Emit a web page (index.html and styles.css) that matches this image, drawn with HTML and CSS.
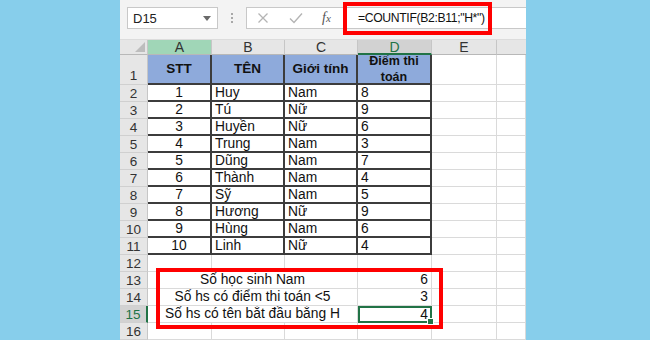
FILE: index.html
```html
<!DOCTYPE html>
<html>
<head>
<meta charset="utf-8">
<link rel="stylesheet" href="styles.css">
</head>
<body>
<div class="page">
  <div class="excel">
    <div class="toolbar">
      <div class="namebox">
        <span class="nb-text">D15</span>
        <svg class="caret" width="8" height="5" viewBox="0 0 8 5"><path d="M0 0 L8 0 L4 5 Z" fill="#6a6a6a"/></svg>
      </div>
      <div class="dots"><i></i><i></i><i></i></div>
      <div class="fbar">
        <svg class="ico" width="12" height="12" viewBox="0 0 12 12"><path d="M1.5 1.5 L10.5 10.5 M10.5 1.5 L1.5 10.5" stroke="#b4b4b4" stroke-width="1.3" fill="none"/></svg>
        <svg class="ico chk" width="14" height="12" viewBox="0 0 14 12"><path d="M1 6.5 L5 10.5 L13 1.5" stroke="#b4b4b4" stroke-width="1.4" fill="none"/></svg>
        <span class="fx"><i>f</i><span class="fxx">x</span></span>
        <span class="formula">=COUNTIF(B2:B11;"H*")</span>
      </div>
    </div>
    <div class="sheet">
      <div class="corner"><svg width="10" height="10" viewBox="0 0 10 10"><path d="M10 0 L10 10 L0 10 Z" fill="#bdbdbd"/></svg></div>
      <div class="ch ch-a">A</div>
      <div class="ch">B</div>
      <div class="ch">C</div>
      <div class="ch ch-sel">D</div>
      <div class="ch">E</div>
      <div class="ch ch-f"></div>

      <div class="rh rh1">1</div>
      <div class="c t hd">STT</div>
      <div class="c t hd">TÊN</div>
      <div class="c t hd">Giới tính</div>
      <div class="c t hd hd2">Điểm thi<br>toán</div>
      <div class="c"></div><div class="c"></div>

      <div class="rh">2</div><div class="c t ctr">1</div><div class="c t">Huy</div><div class="c t">Nam</div><div class="c t">8</div><div class="c"></div><div class="c"></div>
      <div class="rh">3</div><div class="c t ctr">2</div><div class="c t">Tú</div><div class="c t">Nữ</div><div class="c t">9</div><div class="c"></div><div class="c"></div>
      <div class="rh">4</div><div class="c t ctr">3</div><div class="c t">Huyền</div><div class="c t">Nữ</div><div class="c t">6</div><div class="c"></div><div class="c"></div>
      <div class="rh">5</div><div class="c t ctr">4</div><div class="c t">Trung</div><div class="c t">Nam</div><div class="c t">3</div><div class="c"></div><div class="c"></div>
      <div class="rh">6</div><div class="c t ctr">5</div><div class="c t">Dũng</div><div class="c t">Nam</div><div class="c t">7</div><div class="c"></div><div class="c"></div>
      <div class="rh">7</div><div class="c t ctr">6</div><div class="c t">Thành</div><div class="c t">Nam</div><div class="c t">4</div><div class="c"></div><div class="c"></div>
      <div class="rh">8</div><div class="c t ctr">7</div><div class="c t">Sỹ</div><div class="c t">Nam</div><div class="c t">5</div><div class="c"></div><div class="c"></div>
      <div class="rh">9</div><div class="c t ctr">8</div><div class="c t">Hương</div><div class="c t">Nữ</div><div class="c t">9</div><div class="c"></div><div class="c"></div>
      <div class="rh">10</div><div class="c t ctr">9</div><div class="c t">Hùng</div><div class="c t">Nam</div><div class="c t">6</div><div class="c"></div><div class="c"></div>
      <div class="rh">11</div><div class="c t ctr">10</div><div class="c t">Linh</div><div class="c t">Nữ</div><div class="c t">4</div><div class="c"></div><div class="c"></div>

      <div class="rh">12</div><div class="c"></div><div class="c"></div><div class="c"></div><div class="c"></div><div class="c"></div><div class="c"></div>
      <div class="rh">13</div><div class="c m3 ctr">Số học sinh Nam</div><div class="c rt">6</div><div class="c"></div><div class="c"></div>
      <div class="rh">14</div><div class="c m3 ctr">Số hs có điểm thi toán &lt;5</div><div class="c rt">3</div><div class="c"></div><div class="c"></div>
      <div class="rh rh-sel">15</div><div class="c m3 ctr">Số hs có tên bắt đầu bằng H</div><div class="c rt sel">4<span class="handle"></span></div><div class="c"></div><div class="c"></div>
      <div class="rh">16</div><div class="c"></div><div class="c"></div><div class="c"></div><div class="c"></div><div class="c"></div><div class="c"></div>
    </div>
    <div class="callout callout-formula"></div>
    <div class="callout callout-result"></div>
  </div>
</div>
</body>
</html>
```

FILE: styles.css
```css
html, body {
  margin: 0;
  padding: 0;
}
body {
  width: 650px;
  height: 340px;
  overflow: hidden;
  background: #87ceeb;
  font-family: "Liberation Sans", Arial, sans-serif;
}
.page {
  display: flex;
  justify-content: flex-start;
  padding-left: 120px;
}
.excel {
  position: relative;
  width: 406px;
  height: 340px;
  background: #ffffff;
  overflow: hidden;
}
.toolbar {
  height: 40px;
  box-sizing: border-box;
  background: #f3f3f3;
  display: flex;
  align-items: flex-start;
  padding-top: 7px;
  padding-left: 7px;
  border-bottom: 1px solid #dcdcdc;
}
.namebox {
  width: 91px;
  height: 22px;
  box-sizing: border-box;
  background: #fff;
  border: 1px solid #c8c8c8;
  display: flex;
  align-items: center;
  justify-content: space-between;
  padding: 0 6px 0 5px;
}
.nb-text {
  font-size: 13px;
  color: #222;
}
.caret {
  display: block;
}
.dots {
  width: 28px;
  height: 22px;
  display: flex;
  flex-direction: column;
  align-items: center;
  justify-content: center;
  gap: 2px;
}
.dots i {
  display: block;
  width: 2px;
  height: 2px;
  background: #a8a8a8;
}
.fbar {
  flex: 1;
  height: 22px;
  box-sizing: border-box;
  background: #fff;
  border: 1px solid #c8c8c8;
  border-right: none;
  display: flex;
  align-items: center;
  padding-left: 10px;
}
.ico {
  display: block;
}
.chk {
  margin-left: 20px;
}
.fx {
  margin-left: 19px;
  font-family: "Liberation Serif", "DejaVu Serif", serif;
  font-size: 14px;
  color: #555;
  font-style: italic;
  width: 16px;
}
.fxx {
  font-size: 11px;
}
.formula {
  margin-left: 20px;
  font-size: 12.2px;
  letter-spacing: -0.35px;
  color: #111;
  white-space: nowrap;
}
.sheet {
  display: grid;
  grid-template-columns: 28px 64px 73px 73px 74px 65px 29px;
  grid-template-rows: 15px 30px repeat(15, 17px);
  font-size: 13.8px;
  color: #111;
}
.corner {
  background: #e6e6e6;
  border-right: 1px solid #c6c6c6;
  border-bottom: 1px solid #b8b8b8;
  box-sizing: border-box;
  display: flex;
  align-items: flex-end;
  justify-content: flex-end;
  padding: 0 2px 2px 0;
}
.corner svg {
  display: block;
}
.ch {
  background: #e6e6e6;
  border-right: 1px solid #c6c6c6;
  border-bottom: 1px solid #b8b8b8;
  box-sizing: border-box;
  display: flex;
  align-items: center;
  justify-content: center;
  font-size: 14px;
  color: #333;
  line-height: 14px;
}
.ch-a {
  background: #a0d6b7;
}
.ch-sel {
  background: #d2d2d2;
  color: #217346;
  border-bottom: 2px solid #217346;
}
.ch-f {
  border-right: none;
}
.rh {
  background: #e6e6e6;
  border-right: 1px solid #c6c6c6;
  border-bottom: 1px solid #d0d0d0;
  box-sizing: border-box;
  display: flex;
  align-items: center;
  justify-content: center;
  font-size: 13.5px;
  color: #333;
}
.rh1 {
  align-items: flex-end;
  padding-bottom: 1px;
}
.rh-sel {
  background: #d2d2d2;
  color: #217346;
  border-right: 2px solid #217346;
}
.c {
  box-sizing: border-box;
  border-right: 1px solid #dadada;
  border-bottom: 1px solid #dadada;
  padding: 0 3px;
  line-height: 16px;
  white-space: nowrap;
  overflow: hidden;
  display: flex;
  align-items: center;
}
.t {
  border-right: 2px solid #3c3c3c;
  border-bottom: 2px solid #3c3c3c;
}
.hd {
  background: #8eaadb;
  font-weight: bold;
  justify-content: center;
  text-align: center;
  font-size: 13.5px;
}
.hd2 {
  font-size: 12.5px;
  line-height: 16px;
}
.ctr {
  justify-content: center;
}
.rt {
  justify-content: flex-end;
}
.m3 {
  grid-column: span 3;
}
.sel {
  position: relative;
  overflow: visible;
  border: 2px solid #217346;
  padding-right: 2px;
}
.handle {
  position: absolute;
  right: -4px;
  bottom: -4px;
  width: 5px;
  height: 5px;
  background: #217346;
  border: 1px solid #fff;
}
.callout {
  position: absolute;
  border: 4px solid #ff0000;
  box-sizing: border-box;
}
.callout-formula {
  left: 223px;
  top: 2px;
  width: 149px;
  height: 33px;
}
.callout-result {
  left: 36px;
  top: 268px;
  width: 287px;
  height: 61px;
}
```
